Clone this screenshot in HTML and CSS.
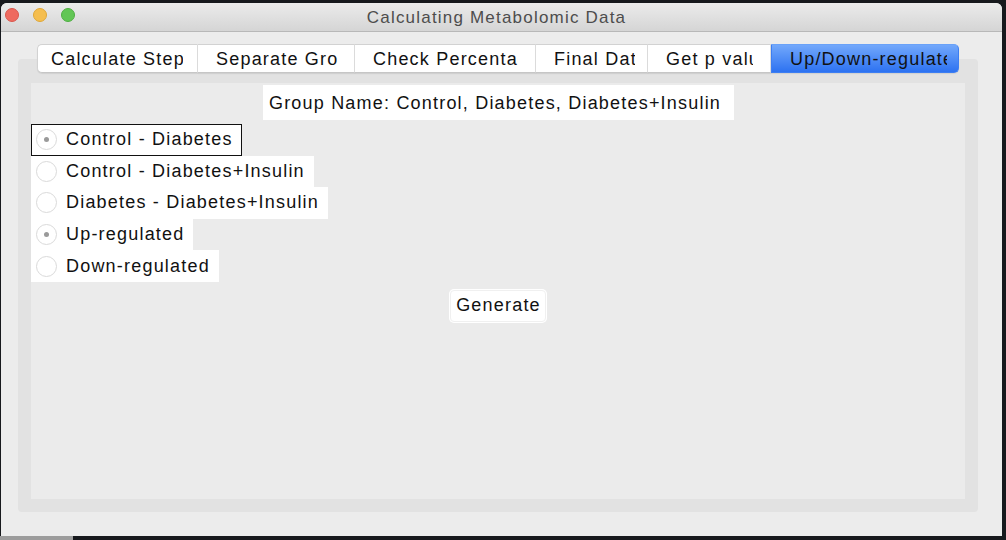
FILE: index.html
```html
<!DOCTYPE html>
<html>
<head>
<meta charset="utf-8">
<link rel="stylesheet" href="styles.css">
</head>
<body>
<div class="screen">
  <div class="window">
    <div class="titlebar">
      <div class="lights">
        <span class="light red"></span>
        <span class="light yellow"></span>
        <span class="light green"></span>
      </div>
      <div class="title">Calculating Metabolomic Data</div>
    </div>
    <div class="content">
      <div class="tabs">
        <div class="tab t1"><span class="lbl">Calculate Step</span></div>
        <div class="tab t2"><span class="lbl">Separate Group</span></div>
        <div class="tab t3"><span class="lbl">Check Percentage</span></div>
        <div class="tab t4"><span class="lbl">Final Data</span></div>
        <div class="tab t5"><span class="lbl">Get p value</span></div>
        <div class="tab t6 active"><span class="lbl">Up/Down-regulated</span></div>
      </div>
      <div class="pane">
        <div class="inner">
          <div class="group-label">Group Name: Control, Diabetes, Diabetes+Insulin</div>
          <div class="radios">
            <div class="radio focused"><span class="circle on"></span><span class="rtext">Control - Diabetes</span></div>
            <div class="radio"><span class="circle"></span><span class="rtext">Control - Diabetes+Insulin</span></div>
            <div class="radio"><span class="circle"></span><span class="rtext">Diabetes - Diabetes+Insulin</span></div>
            <div class="radio"><span class="circle on"></span><span class="rtext">Up-regulated</span></div>
            <div class="radio"><span class="circle"></span><span class="rtext">Down-regulated</span></div>
          </div>
          <div class="btn-row"><button class="btn">Generate</button></div>
        </div>
      </div>
    </div>
  </div>
  <div class="under">
    <span class="under-gray"></span>
  </div>
</div>
</body>
</html>
```
FILE: styles.css
```css
* { box-sizing: border-box; }
html, body { margin: 0; padding: 0; }
body {
  background: #17191d;
  width: 1006px;
  height: 540px;
  overflow: hidden;
  font-family: "Liberation Sans", Arial, sans-serif;
}
.screen { padding-top: 3px; }
.window {
  margin-left: 1px;
  width: 1001px;
  height: 533px;
  background: #ececec;
  border-radius: 6px 6px 0 0;
  overflow: hidden;
}
.titlebar {
  height: 29px;
  background: linear-gradient(#ebebeb, #d5d5d5);
  border-bottom: 1px solid #b8b8b8;
  display: flex;
  align-items: center;
  position: relative;
}
.lights {
  display: flex;
  gap: 14px;
  padding-left: 4px;
  position: absolute;
  left: 0;
  top: 5px;
}
.light {
  width: 14px;
  height: 14px;
  border-radius: 50%;
  display: block;
}
.red { background: #ee6a5f; border: 1px solid #d9574d; }
.yellow { background: #f5be4f; border: 1px solid #dea637; }
.green { background: #62c655; border: 1px solid #4eae42; }
.title {
  flex: 1;
  text-align: center;
  font-size: 17px;
  letter-spacing: 1.2px;
  color: #4d4d4d;
  padding-right: 10px;
  padding-top: 1px;
}
.content {
  padding: 12px 24px 0 17px;
}
.tabs {
  display: flex;
  justify-content: center;
  height: 29px;
  position: relative;
  z-index: 2;
  margin-bottom: -14px;
}
.tab {
  background: #fff;
  border-top: 1px solid #d2d2d2;
  border-bottom: 1px solid #c6c6c6;
  border-right: 1px solid #dedede;
  height: 29px;
  display: flex;
  align-items: center;
  padding-left: 18px;
  padding-top: 2px;
  font-size: 18px;
  letter-spacing: 1.2px;
  color: #111;
  box-shadow: 0 1px 1px rgba(0,0,0,0.08);
}
.lbl { white-space: nowrap; overflow: hidden; display: block; }
.t1 { width: 161px; padding-left: 13px; border-left: 1px solid #d2d2d2; border-radius: 5px 0 0 5px; }
.t1 .lbl { width: 132px; }
.t2 { width: 157px; }
.t2 .lbl { width: 123px; }
.t3 { width: 181px; }
.t3 .lbl { width: 145px; }
.t4 { width: 112px; }
.t4 .lbl { width: 81px; }
.t5 { width: 123px; }
.t5 .lbl { width: 87px; }
.t6 { width: 188px; }
.t6 .lbl { width: 157px; }
.tab.active {
  background: linear-gradient(#72a8fb, #2d72f1);
  border: 1px solid #3d7ef2;
  border-top-color: #6aa2f8;
  border-radius: 0 5px 5px 0;
  color: #111;
}
.pane {
  background: #e2e2e2;
  border-radius: 4px;
  height: 453px;
  padding: 24px 13px 13px 13px;
}
.inner {
  background: #ebebeb;
  height: 100%;
  padding-top: 2px;
}
.group-label {
  width: 471px;
  height: 35px;
  margin: 0 auto;
  background: #fff;
  font-size: 18px;
  letter-spacing: 1.2px;
  color: #111;
  display: flex;
  align-items: center;
  justify-content: center;
  padding-top: 1px;
  padding-right: 6px;
}
.radios {
  margin-top: 4px;
  display: flex;
  flex-direction: column;
  align-items: flex-start;
}
.radio {
  background: #fff;
  height: 31.6px;
  display: flex;
  align-items: center;
  padding-left: 4px;
  padding-right: 8px;
  font-size: 18px;
  letter-spacing: 1.2px;
  color: #111;
  border: 1px solid transparent;
}
.radio.focused { border-color: #111; }
.circle {
  width: 21px;
  height: 21px;
  border-radius: 50%;
  border: 1px solid #dadada;
  background: #fff;
  margin-right: 9px;
  position: relative;
  flex: none;
}
.circle.on::after {
  content: "";
  position: absolute;
  left: 7px;
  top: 7px;
  width: 5px;
  height: 5px;
  border-radius: 50%;
  background: #9a9a9a;
}
.btn-row {
  display: flex;
  justify-content: center;
  margin-top: 8px;
}
.btn {
  font-family: "Liberation Sans", Arial, sans-serif;
  font-size: 18px;
  letter-spacing: 1.2px;
  color: #111;
  width: 96px;
  height: 32px;
  background: #fff;
  border: 1px solid #f0f0f0;
  border-radius: 4px;
  box-shadow: 0 0 0 1px #fff;
  padding: 0 0 0 1px;
}
.under {
  height: 4px;
  display: flex;
}
.under-gray { width: 73px; height: 4px; background: #9c9c9c; display: block; }
```
